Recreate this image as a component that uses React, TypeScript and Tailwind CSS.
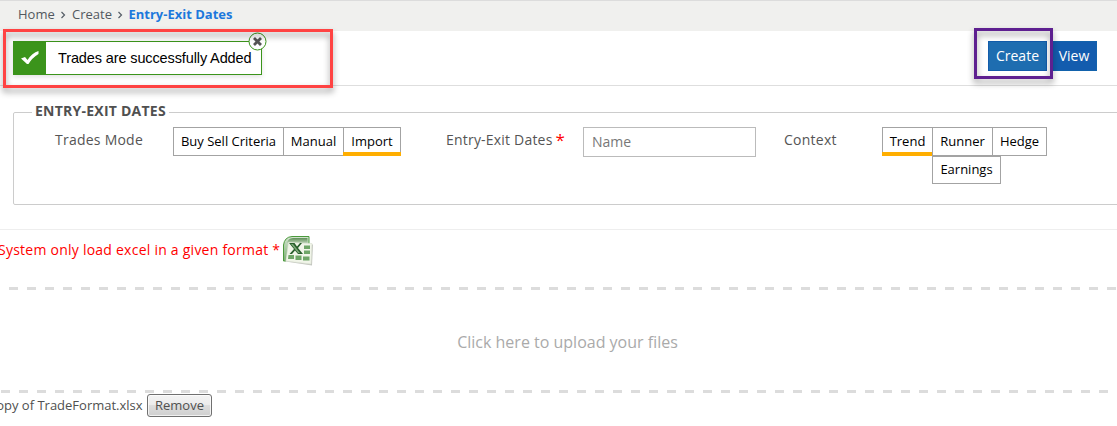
import type { ReactNode } from "react";

function Option({ children, active = false, className = "" }: { children: ReactNode; active?: boolean; className?: string }) {
  return (
    <button
      className={`relative flex shrink-0 items-center justify-center whitespace-nowrap border border-[#a3a3a3] bg-white text-[13px] text-black ${className}`}
    >
      {children}
      {active && <span className="absolute -bottom-px -left-px -right-px h-1 bg-[#ffae00]" />}
    </button>
  );
}

function Dashes({ className = "" }: { className?: string }) {
  return (
    <div
      className={`h-[3px] bg-[repeating-linear-gradient(90deg,#dcdcdc_0px,#dcdcdc_9px,transparent_9px,transparent_18px)] ${className}`}
    />
  );
}

function ExcelIcon() {
  return (
    <svg width="32" height="32" viewBox="0 0 32 32" className="shrink-0">
      <defs>
        <linearGradient id="tab" x1="0" y1="0" x2="0" y2="1">
          <stop offset="0" stopColor="#5f8f58" />
          <stop offset="1" stopColor="#c9dcc4" />
        </linearGradient>
        <linearGradient id="side" x1="0" y1="0" x2="0" y2="1">
          <stop offset="0" stopColor="#d3e4cf" />
          <stop offset="1" stopColor="#7bae73" />
        </linearGradient>
      </defs>
      <path d="M.5 25V9Q1.500 1 9 .5H26V9H7L3 25Z" fill="url(#side)" stroke="#4b9a3c" />
      <path d="M3.500 8Q5 2 10 2H24.500V8Z" fill="url(#tab)" />
      <path d="M6 7 30 8.500 29 29.500 2.500 25.500Z" fill="#c3c5bf" />
      <path d="M5.500 6.500 29 7.500 28 28 3 25Z" fill="#f1f5e9" stroke="#dce3d3" strokeWidth=".6" />
      <path d="M21 9.500h6V13h-6zM21 14.500h6V18h-6zM20 20.500h6.500v4H20zM12.500 19.500h6V24h-6zM5.500 19h5.500v4H5z" fill="#6fa668" />
      <path d="M6 7h5.500l2.500 3.500L17 7h2l-4 5 5 6h-5l-3-3.500L9 18H6.500l4.500-5Z" fill="#285f2b" />
      <path d="M8 8h2l7 9h-2Z" fill="#7ea77a" />
    </svg>
  );
}

export default function App() {
  return (
    <div className="relative flex h-[426px] w-[1117px] flex-col overflow-hidden bg-white font-['Open_Sans',sans-serif] text-[14px] text-[#555]">
      <nav className="flex h-[31px] shrink-0 items-center border-t border-[#dcdcdc] bg-[#f0f0ee] pl-[18px] pb-[2px] text-[13px] text-[#52585f]">
        <span className="w-[37px] whitespace-nowrap">Home</span>
        <svg width="17" height="8" viewBox="0 0 17 8" className="shrink-0" fill="none" stroke="#555d66" strokeWidth="1.200"><path d="m6.500 1 3 3-3 3" /></svg>
        <span className="w-[40px] whitespace-nowrap">Create</span>
        <svg width="16" height="8" viewBox="0 0 16 8" className="shrink-0" fill="none" stroke="#555d66" strokeWidth="1.200"><path d="m6.500 1 3 3-3 3" /></svg>
        <b className="whitespace-nowrap pl-[0.5px] font-bold text-[#1d78dc]">Entry-Exit Dates</b>
      </nav>

      <header className="flex h-[55px] shrink-0 items-start justify-between border-b border-[#dedede] pl-[13px] pr-[20px] pt-[10px]">
        <div className="relative flex h-[34px] w-[249px] border border-[#3b941b] bg-white shadow-[0_2px_5px_rgba(0,0,0,0.12)]">
          <div className="flex w-[32px] items-center justify-center bg-[#3b941b]">
            <svg width="20" height="16" viewBox="0 0 20 16"><path d="m1 8.500 4-1.500 2.500 3Q12 3 18.500 1v3Q12 8 8.500 14H7Z" fill="white" /></svg>
          </div>
          <span className="whitespace-nowrap pl-[12px] font-['Liberation_Sans',sans-serif] text-[14.5px] leading-[32px] tracking-[-0.12px] text-black">Trades are successfully Added</span>
          <svg className="absolute -right-[6px] -top-[10px]" width="19" height="19" viewBox="0 0 19 19">
            <circle cx="9.500" cy="9.500" r="8.500" fill="white" stroke="#3b941b" />
            <path d="m6 6 7 7M13 6l-7 7" stroke="#555" strokeWidth="2.800" />
          </svg>
        </div>
        <div className="flex gap-[4px] text-white">
          <button className="h-[30px] w-[59px] border border-[#125cab] bg-[#1e6db0] pb-[2px]">Create</button>
          <button className="h-[30px] w-[46px] border border-[#1262ac] bg-[#135cae] pb-[2px]">View</button>
        </div>
      </header>

      <fieldset className="ml-[13px] mt-[17px] h-[102px] w-[1120px] shrink-0 rounded-[2px] border border-[#ccc] pl-[41px]">
        <legend className="-ml-[23px] h-[18px] whitespace-nowrap px-[3px] text-[14px] font-bold leading-[16px] tracking-[0.24px] text-[#505050]">ENTRY-EXIT DATES</legend>
        <div className="flex items-start pt-[6px]">
          <label className="w-[118px] whitespace-nowrap leading-[26px] tracking-[0.24px]">Trades Mode</label>
          <div className="flex">
            <Option className="h-[29px] w-[111px]">Buy Sell Criteria</Option>
            <Option className="-ml-px h-[29px] w-[61px]">Manual</Option>
            <Option className="-ml-px h-[29px] w-[58px]" active>Import</Option>
          </div>
          <label className="ml-[45px] flex w-[137px] gap-[3px] whitespace-nowrap leading-[26px] tracking-[0.2px]">Entry-Exit Dates <span className="text-[17px] text-[#f00]">*</span></label>
          <input placeholder="Name" className="h-[30px] w-[173px] border border-[#bbb] px-[8px] pb-[2px] text-[14px] placeholder:text-[#777]" />
          <label className="ml-[28px] w-[98px] whitespace-nowrap leading-[26px] tracking-[0.24px]">Context</label>
          <div className="flex flex-col">
            <div className="flex">
              <Option className="h-[29px] w-[51px]" active>Trend</Option>
              <Option className="-ml-px h-[29px] w-[61px]">Runner</Option>
              <Option className="-ml-px h-[29px] w-[55px]">Hedge</Option>
            </div>
            <Option className="ml-[50px] h-[28px] w-[69px]">Earnings</Option>
          </div>
        </div>
      </fieldset>

      <hr className="mt-[24px] shrink-0 border-[#eee]" />
      <div className="flex h-[57px] shrink-0 items-start pt-[6px]">
        <span className="-ml-[2px] w-[285px] whitespace-nowrap pt-[4px] leading-[20px] tracking-[0.24px] text-[#f00]">System only load excel in a given format *</span>
        <ExcelIcon />
      </div>
      <Dashes className="ml-[9px] shrink-0" />
      <div className="flex h-[100px] shrink-0 items-center justify-center pl-[18px] pt-[4px] text-[16px] text-[#aaa]">Click here to upload your files</div>
      <Dashes className="ml-px w-[1107px] shrink-0" />
      <div className="flex items-start text-[13px] text-[#505050]">
        <span className="-ml-[12px] w-[159px] whitespace-nowrap pt-[2px] leading-[20px]">Copy of TradeFormat.xlsx</span>
        <button className="mt-px h-[23px] w-[65px] rounded-[3px] border border-[#707070] bg-[linear-gradient(#f3f3f3_0%,#ebebeb_50%,#dddddd_50%,#cfcfcf_100%)] leading-[19px] shadow-[inset_0_0_0_1px_rgba(255,255,255,0.7)]">Remove</button>
      </div>

      <div className="pointer-events-none absolute left-[3px] top-[29px] h-[59px] w-[330px] border-[3px] border-[#ff4343] drop-shadow-[0_4px_3px_rgba(0,0,0,0.4)]" />
      <div className="pointer-events-none absolute left-[974px] top-[28px] h-[51px] w-[79px] border-[3px] border-[#5e2090] drop-shadow-[0_4px_3px_rgba(0,0,0,0.4)]" />
    </div>
  );
}
